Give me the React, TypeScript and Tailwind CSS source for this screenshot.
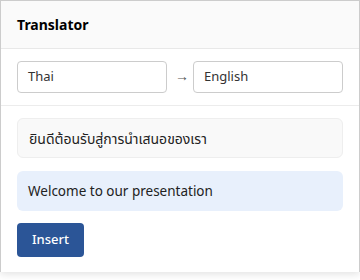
export default function App() {
  return (
    <div className="w-[360px] h-[280px] bg-white" style={{ fontFamily: '"Noto Sans", sans-serif' }}>
      <div className="border border-[#cccccc] border-b-0 bg-white shadow-[0_2px_8px_rgba(0,0,0,0.12)]">
        {/* header */}
        <div className="h-[48px] bg-[#fafafa] border-b border-[#e8e8e8] px-4 flex items-center">
          <h1 className="text-[14px] font-bold text-black">Translator</h1>
        </div>

        {/* language row */}
        <div className="px-4 py-[12px] border-b border-[#ececec] flex items-center gap-[8px]">
          <div className="flex-1 h-[32px] border border-[#cccccc] rounded-[4px] px-[10px] flex items-center text-[13px] text-[#333]">
            Thai
          </div>
          <span className="text-[14px] leading-none text-[#555] w-[10px] text-center -mt-[3px]">→</span>
          <div className="flex-1 h-[32px] border border-[#cccccc] rounded-[4px] px-[10px] flex items-center text-[13px] text-[#333]">
            English
          </div>
        </div>

        {/* content */}
        <div className="px-4 pt-[12px] pb-[15px] flex flex-col gap-[13px]">
          <div
            className="h-[40px] bg-[#f9f9f9] border border-[#eeeeee] rounded-[6px] px-[11px] flex items-center text-[14px] text-[#222]"
            style={{ fontFamily: '"Noto Sans", "Noto Sans Thai", "DejaVu Sans", sans-serif' }}
          >
            ยินดีต้อนรับสู่การนำเสนอของเรา
          </div>
          <div className="h-[40px] bg-[#e8f0fc] rounded-[6px] px-[11px] flex items-center text-[13.5px] text-[#222]">
            Welcome to our presentation
          </div>
          <div className="-mt-[1px]">
            <button className="h-[34px] px-[15px] bg-[#2b5597] text-white text-[13px] font-medium rounded-[4px]">
              Insert
            </button>
          </div>
        </div>
      </div>
    </div>
  );
}
